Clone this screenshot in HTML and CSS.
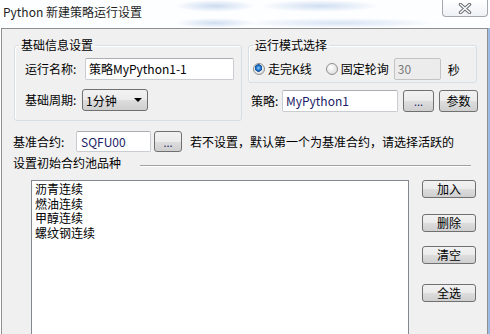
FILE: index.html
```html
<html>
  <head>
    <title>Python 新建策略运行设置</title>
    <link rel="stylesheet" href="styles.css">
  </head>
  <body>
    <div class="titlebar">
      <span class="title">Python 新建策略运行设置</span>
      <div class="close">
        <svg width="14" height="11" viewBox="0 0 14 11">
          <path d="M2.5 1.5 L11.5 9.5 M11.5 1.5 L2.5 9.5" stroke="#6b6f75" stroke-width="3.4" stroke-linecap="round"/>
          <path d="M2.5 1.5 L11.5 9.5 M11.5 1.5 L2.5 9.5" stroke="#ffffff" stroke-width="1.4" stroke-linecap="round"/>
        </svg>
      </div>
    </div>

    <div class="dialog">
      <div class="top">
        <fieldset class="group group-info">
          <legend>基础信息设置</legend>
          <div class="row">
            <span class="label label-name">运行名称:</span>
            <span class="field field-name">策略MyPython1-1</span>
          </div>
          <div class="row">
            <span class="label label-period">基础周期:</span>
            <span class="select">1分钟<span class="arrow"></span></span>
          </div>
        </fieldset>

        <div class="right-col">
          <fieldset class="group group-mode">
            <legend>运行模式选择</legend>
            <div class="row">
              <span class="radio on"></span>
              <span class="radio-text">走完K线</span>
              <span class="radio radio-second"></span>
              <span class="radio-text">固定轮询</span>
              <span class="field field-disabled">30</span>
              <span class="unit">秒</span>
            </div>
          </fieldset>
          <div class="row strategy">
            <span class="label label-strategy">策略:</span>
            <span class="field field-strategy">MyPython1</span>
            <span class="btn btn-dots">...</span>
            <span class="btn btn-param">参数</span>
          </div>
        </div>
      </div>

      <div class="row base">
        <span class="label label-base">基准合约:</span>
        <span class="field field-base">SQFU00</span>
        <span class="btn btn-dots btn-dots-small">...</span>
        <span class="hint">若不设置，默认第一个为基准合约，请选择活跃的</span>
      </div>

      <div class="section-head">
        <span>设置初始合约池品种</span>
        <div class="rule"></div>
      </div>

      <div class="pool">
        <div class="list">
          <div>沥青连续</div>
          <div>燃油连续</div>
          <div>甲醇连续</div>
          <div>螺纹钢连续</div>
        </div>
        <div class="side-buttons">
          <span class="btn side add">加入</span>
          <span class="btn side del">删除</span>
          <span class="btn side clear">清空</span>
          <span class="btn side all">全选</span>
        </div>
      </div>
    </div>
  </body>
</html>
```

FILE: styles.css
```css
body {
  margin: 0;
  width: 490px;
  height: 334px;
  overflow: hidden;
  font-family: "Noto Sans CJK SC", "Liberation Sans", sans-serif;
  font-size: 12px;
  color: #000;
  background: linear-gradient(90deg, #ffffff 0%, #ffffff 98%, #8fb3e0 100%);
}

.titlebar {
  height: 28px;
  display: flex;
  justify-content: space-between;
  align-items: flex-start;
  background:
    radial-gradient(ellipse 40px 6px at 215px 6px, rgba(170, 195, 230, 0.6), transparent),
    radial-gradient(ellipse 60px 6px at 320px 6px, rgba(170, 195, 230, 0.55), transparent),
    radial-gradient(ellipse 40px 5px at 215px 23px, rgba(170, 195, 230, 0.55), transparent),
    radial-gradient(ellipse 100px 5px at 340px 23px, rgba(170, 195, 230, 0.45), transparent),
    #fdfeff;
}
.title {
  margin-top: 4px;
  padding-left: 3px;
  line-height: 16px;
  font-size: 12px;
  color: #1e1e1e;
}
.close {
  width: 44px;
  height: 16px;
  margin-right: 2px;
  border: 1px solid #a3a8ae;
  border-top: none;
  border-radius: 0 0 4px 4px;
  background: linear-gradient(#ffffff, #eef1f5);
  display: flex;
  align-items: center;
  justify-content: center;
}

.dialog {
  margin-left: 1px;
  width: 487px;
  height: 306px;
  box-sizing: border-box;
  border: 1px solid #8d8f91;
  border-bottom: none;
  background: #f0f0f0;
  padding: 9px 0 0 11px;
}

.top {
  display: flex;
  gap: 6px;
  margin-left: 1px;
}

.group {
  margin: 0;
  min-width: 0;
  border: 1px solid #d5dfe5;
  border-radius: 3px;
  box-shadow: inset 1px 1px 0 #fff;
}
.group legend {
  line-height: 14px;
  font-size: 12px;
  padding: 0 2px;
}
.group-info {
  width: 228px;
  box-sizing: border-box;
  padding: 6px 0 9px 10px;
  display: flex;
  flex-direction: column;
  gap: 9px;
}
.group-info legend {
  margin-left: -6px;
}
.group-mode {
  width: 229px;
  box-sizing: border-box;
  padding: 6px 0 2px 4px;
}
.group-mode legend {
  margin-left: 0;
}

.row {
  display: flex;
  align-items: center;
  height: 22px;
}

.label {
  line-height: 14px;
}
.label-name { width: 60px; }
.label-period { width: 57px; }
.label-strategy { width: 31px; }
.label-base { width: 63px; }

.field {
  height: 22px;
  box-sizing: border-box;
  border: 1px solid #c9ccd1;
  border-top-color: #abadb3;
  background: #fff;
  line-height: 20px;
  padding-left: 3px;
  border-radius: 2px;
}
.field-name { width: 149px; }
.field-strategy { width: 116px; color: #1b1b66; }
.field-base { width: 75px; height: 21px; line-height: 19px; padding-left: 4px; color: #1b1b66; }
.field-disabled {
  width: 47px;
  margin-left: 5px;
  background: #ececec;
  border-color: #c3c3c3;
  color: #7a7a7a;
}
.unit { margin-left: 7px; }

.select {
  width: 66px;
  height: 22px;
  box-sizing: border-box;
  border: 1px solid #707070;
  border-radius: 3px;
  background: linear-gradient(#f2f2f2 0%, #ebebeb 50%, #dddddd 51%, #cfcfcf 100%);
  display: flex;
  align-items: center;
  padding-left: 3px;
}
.arrow {
  margin-left: auto;
  margin-right: 5px;
  width: 0;
  height: 0;
  border-left: 4px solid transparent;
  border-right: 4px solid transparent;
  border-top: 4px solid #000;
}

.radio {
  width: 12px;
  height: 12px;
  box-sizing: border-box;
  border: 1px solid #8e8f8f;
  border-radius: 50%;
  background: radial-gradient(circle at 40% 35%, #ffffff, #d4d4d4);
  margin-right: 3px;
}
.radio.on {
  background:
    radial-gradient(circle at 45% 40%, #8fd1ff 0, #2b7ccf 2px, #0c4f9e 3.5px, transparent 4px),
    radial-gradient(circle at 40% 35%, #ffffff, #d4d4d4);
}
.radio-second { margin-left: 14px; }
.radio-text { line-height: 14px; }

.right-col {
  display: flex;
  flex-direction: column;
}
.strategy {
  margin-top: 7px;
  padding-left: 3px;
}

.btn {
  box-sizing: border-box;
  border: 1px solid #707070;
  border-radius: 3px;
  background: linear-gradient(#f2f2f2 0%, #ebebeb 50%, #dddddd 51%, #cfcfcf 100%);
  display: flex;
  align-items: center;
  justify-content: center;
  line-height: 14px;
}
.btn-dots {
  width: 31px;
  height: 22px;
  margin-left: 5px;
  color: #1b1b66;
  font-size: 11px;
}
.btn-param {
  width: 39px;
  height: 22px;
  margin-left: 5px;
}
.btn-dots-small {
  width: 28px;
  height: 21px;
  margin-left: 3px;
}

.base {
  margin-top: 10px;
  height: 21px;
}
.hint { margin-left: 8px; }

.section-head {
  display: flex;
  align-items: center;
  margin-top: 4px;
  height: 14px;
  line-height: 14px;
}
.rule {
  margin-left: 19px;
  width: 331px;
  border-top: 1px solid #a0a0a0;
  border-bottom: 1px solid #fff;
  margin-top: 5px;
}

.pool {
  display: flex;
  margin-top: 10px;
  margin-left: 18px;
}
.list {
  width: 378px;
  height: 160px;
  box-sizing: border-box;
  border: 1px solid #828790;
  background: #fff;
  padding: 1px 0 0 3px;
  line-height: 14.5px;
}
.side-buttons {
  display: flex;
  flex-direction: column;
  margin-left: 13px;
}
.side {
  width: 54px;
  height: 18px;
}
.del { margin-top: 16px; }
.clear { margin-top: 14px; }
.all { margin-top: 20px; }
```
